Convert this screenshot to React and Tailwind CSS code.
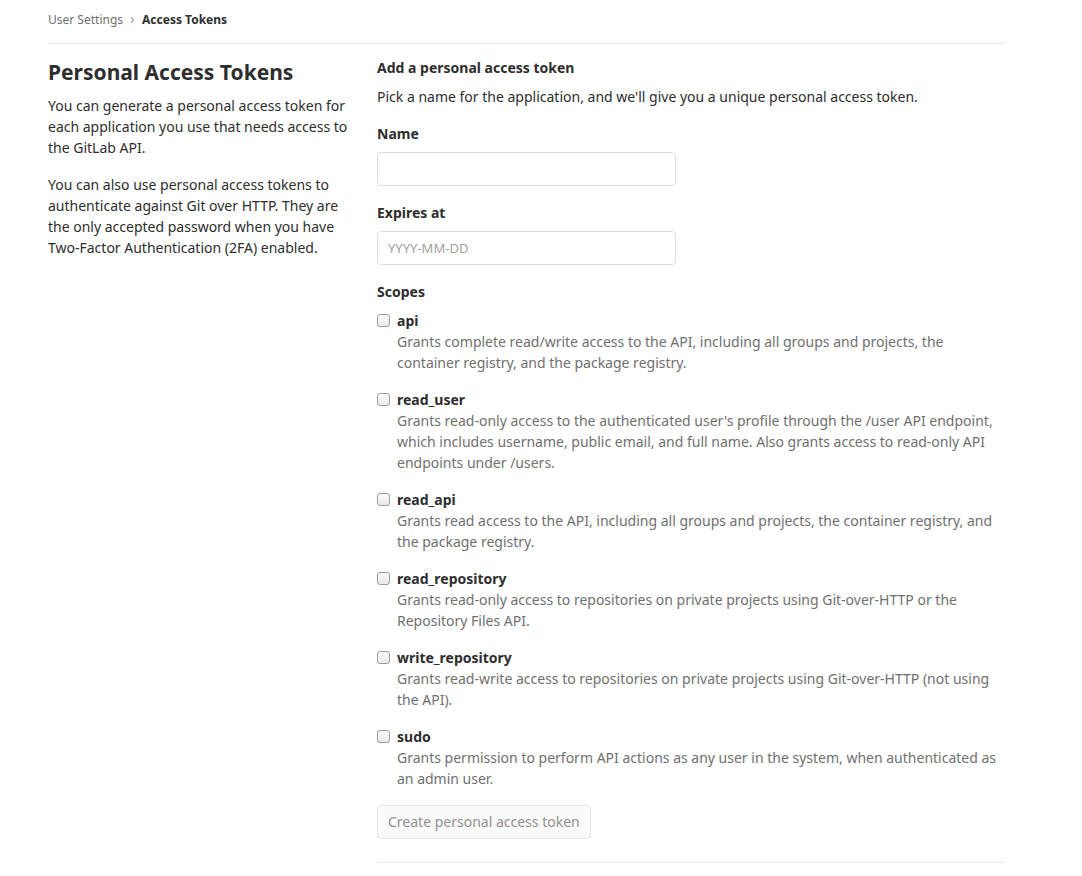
import React from "react";

const scopes = [
  {
    name: "api",
    desc: "Grants complete read/write access to the API, including all groups and projects, the container registry, and the package registry.",
  },
  {
    name: "read_user",
    desc: "Grants read-only access to the authenticated user's profile through the /user API endpoint, which includes username, public email, and full name. Also grants access to read-only API endpoints under /users.",
  },
  {
    name: "read_api",
    desc: "Grants read access to the API, including all groups and projects, the container registry, and the package registry.",
  },
  {
    name: "read_repository",
    desc: "Grants read-only access to repositories on private projects using Git-over-HTTP or the Repository Files API.",
  },
  {
    name: "write_repository",
    desc: "Grants read-write access to repositories on private projects using Git-over-HTTP (not using the API).",
  },
  {
    name: "sudo",
    desc: "Grants permission to perform API actions as any user in the system, when authenticated as an admin user.",
  },
];

export default function App() {
  return (
    <div
      className="min-h-[876px] bg-white text-[#2e2e2e] text-[14px] leading-[21px]"
      style={{ fontFamily: '"Noto Sans", "Open Sans", sans-serif' }}
    >
      <div className="ml-[48px] w-[957px]">
        <div className="h-[44px] border-b border-[#e5e5e5] pt-[11px] flex items-start text-[12px] leading-[18px]">
          <span className="text-[#707070]">User Settings</span>
          <svg className="mx-[5px] mt-[5px]" width="8" height="8" viewBox="0 0 8 8">
            <path d="M3 1.5 L5.5 4 L3 6.5" fill="none" stroke="#a0a0a0" strokeWidth="1.1" />
          </svg>
          <span className="font-bold text-[#2e2e2e] ml-[1px]">Access Tokens</span>
        </div>
        <div className="flex">
          <div className="w-[302px] mr-[27px]">
            <h4 className="mt-[16px] mb-[11px] text-[21px] leading-[24px] font-bold text-[#2e2e2e]">
              Personal Access Tokens
            </h4>
            <p className="mb-[16px]">
              You can generate a personal access token for each application you use that needs access to the GitLab API.
            </p>
            <p>
              You can also use personal access tokens to authenticate against Git over HTTP. They are the only accepted password when you have Two-Factor Authentication (2FA) enabled.
            </p>
          </div>
          <div className="w-[628px]">
            <h5 className="mt-[13px] mb-[8px] font-bold">Add a personal access token</h5>
            <p className="mb-[16px]">
              Pick a name for the application, and we'll give you a unique personal access token.
            </p>
            <div className="mb-[16px]">
              <label className="block font-bold mb-[8px]">Name</label>
              <input
                type="text"
                className="block w-[299px] h-[34px] border border-[#dfdfdf] rounded-[4px] px-[10px] outline-none"
              />
            </div>
            <div className="mb-[16px]">
              <label className="block font-bold mb-[8px]">Expires at</label>
              <input
                type="text"
                placeholder="YYYY-MM-DD"
                className="block w-[299px] h-[34px] border border-[#dfdfdf] rounded-[4px] px-[10px] text-[13px] placeholder:text-[#a0a0a0] outline-none"
              />
            </div>
            <label className="block font-bold mb-[8px]">Scopes</label>
            <div className="flex flex-col gap-[16px]">
              {scopes.map((s) => (
                <div key={s.name} className="flex items-start">
                  <input
                    type="checkbox"
                    className="appearance-none mt-[4px] w-[13px] h-[13px] mr-[7px] ml-0 shrink-0 border border-[#9c9c9c] rounded-[3px] bg-gradient-to-b from-[#fbfbfb] to-[#e9e9e9]"
                  />
                  <div>
                    <div className="font-bold">{s.name}</div>
                    <div className="text-[#707070]">{s.desc}</div>
                  </div>
                </div>
              ))}
            </div>
            <button
              disabled
              className="mt-[16px] h-[34px] px-[10px] pb-[1px] border border-[#e5e5e5] bg-[#fafafa] rounded-[4px] text-[#909090] text-[14px]"
            >
              Create personal access token
            </button>
            <div className="mt-[23px] border-t border-[#e5e5e5]" />
          </div>
        </div>
      </div>
    </div>
  );
}
